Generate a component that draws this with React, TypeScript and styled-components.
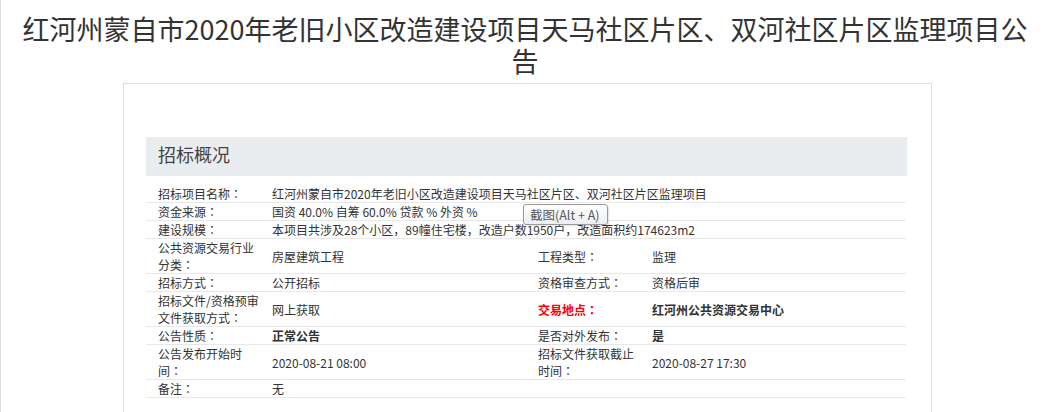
import React from "react";
import styled, { createGlobalStyle } from "styled-components";

const GlobalStyle = createGlobalStyle`
  html, body {
    margin: 0;
    padding: 0;
    background: #ffffff;
  }
  body {
    font-family: "Noto Sans CJK SC", "Noto Sans", sans-serif;
    color: #333333;
  }
`;

const Page = styled.div`
  position: relative;
  min-height: 412px;
  border-left: 1px solid #dddddd;
  overflow: hidden;
`;

const Title = styled.h1`
  margin: 13px 0 0;
  padding: 0 10px;
  font-size: 27px;
  line-height: 32px;
  font-weight: normal;
  text-align: center;
  color: #333333;
`;

const Card = styled.div`
  margin: 6px 0 0 122px;
  width: 809px;
  box-sizing: border-box;
  border: 1px solid #dddddd;
  border-bottom: none;
  padding: 53px 24px 40px 22px;
  min-height: 360px;
`;

const SectionHeader = styled.div`
  height: 39px;
  box-sizing: border-box;
  background: #eaedf0;
  padding: 0 0 5px 12px;
  font-size: 18px;
  line-height: 34px;
  color: #444444;
`;

const InfoTable = styled.table`
  margin-top: 9px;
  width: 760px;
  border-collapse: collapse;
  table-layout: fixed;
  font-size: 12px;
  line-height: 17px;
`;

const Row = styled.tr`
  border-bottom: 1px solid #e8e8e8;
`;

const Cell = styled.td<{ $bold?: boolean; $red?: boolean }>`
  padding: 0 0 0 12px;
  vertical-align: middle;
  color: ${(p) => (p.$red ? "#ff0000" : "#333333")};
  font-weight: ${(p) => (p.$bold ? "bold" : "normal")};
  word-break: normal;
`;

const Colon = styled.span`
  font-family: "Noto Sans CJK TC", "Noto Sans CJK SC", sans-serif;
`;

const Tooltip = styled.div`
  position: absolute;
  left: 522px;
  top: 204px;
  width: 85px;
  height: 21px;
  box-sizing: border-box;
  border: 1px solid #9a9a9a;
  border-radius: 3px;
  background: linear-gradient(#ffffff, #eceef3);
  font-size: 12.5px;
  line-height: 19px;
  padding-left: 6px;
  color: #575757;
  white-space: nowrap;
  box-shadow: 1px 1px 2px rgba(0, 0, 0, 0.12);
`;

const Label = ({ text, ...rest }: { text: string; $red?: boolean; $bold?: boolean }) => (
  <Cell {...rest}>
    {text}
    <Colon>：</Colon>
  </Cell>
);

export default function App() {
  return (
    <>
      <GlobalStyle />
      <Page>
        <Title>红河州蒙自市2020年老旧小区改造建设项目天马社区片区、双河社区片区监理项目公告</Title>
        <Card>
          <SectionHeader>招标概况</SectionHeader>
          <InfoTable>
            <colgroup>
              <col style={{ width: 114 }} />
              <col style={{ width: 266 }} />
              <col style={{ width: 114 }} />
              <col style={{ width: 266 }} />
            </colgroup>
            <tbody>
              <Row>
                <Label text="招标项目名称" />
                <Cell colSpan={3}>红河州蒙自市2020年老旧小区改造建设项目天马社区片区、双河社区片区监理项目</Cell>
              </Row>
              <Row>
                <Label text="资金来源" />
                <Cell colSpan={3}>国资 40.0% 自筹 60.0% 贷款 % 外资 %</Cell>
              </Row>
              <Row>
                <Label text="建设规模" />
                <Cell colSpan={3}>本项目共涉及28个小区，89幢住宅楼，改造户数1950户，改造面积约174623m2</Cell>
              </Row>
              <Row>
                <Label text="公共资源交易行业分类" />
                <Cell>房屋建筑工程</Cell>
                <Label text="工程类型" />
                <Cell>监理</Cell>
              </Row>
              <Row>
                <Label text="招标方式" />
                <Cell>公开招标</Cell>
                <Label text="资格审查方式" />
                <Cell>资格后审</Cell>
              </Row>
              <Row>
                <Label text="招标文件/资格预审文件获取方式" />
                <Cell>网上获取</Cell>
                <Label text="交易地点" $red $bold />
                <Cell $bold>红河州公共资源交易中心</Cell>
              </Row>
              <Row>
                <Label text="公告性质" />
                <Cell $bold>正常公告</Cell>
                <Label text="是否对外发布" />
                <Cell $bold>是</Cell>
              </Row>
              <Row>
                <Label text="公告发布开始时间" />
                <Cell>2020-08-21 08:00</Cell>
                <Label text="招标文件获取截止时间" />
                <Cell>2020-08-27 17:30</Cell>
              </Row>
              <Row>
                <Label text="备注" />
                <Cell colSpan={3}>无</Cell>
              </Row>
            </tbody>
          </InfoTable>
        </Card>
        <Tooltip>截图(Alt + A)</Tooltip>
      </Page>
    </>
  );
}
